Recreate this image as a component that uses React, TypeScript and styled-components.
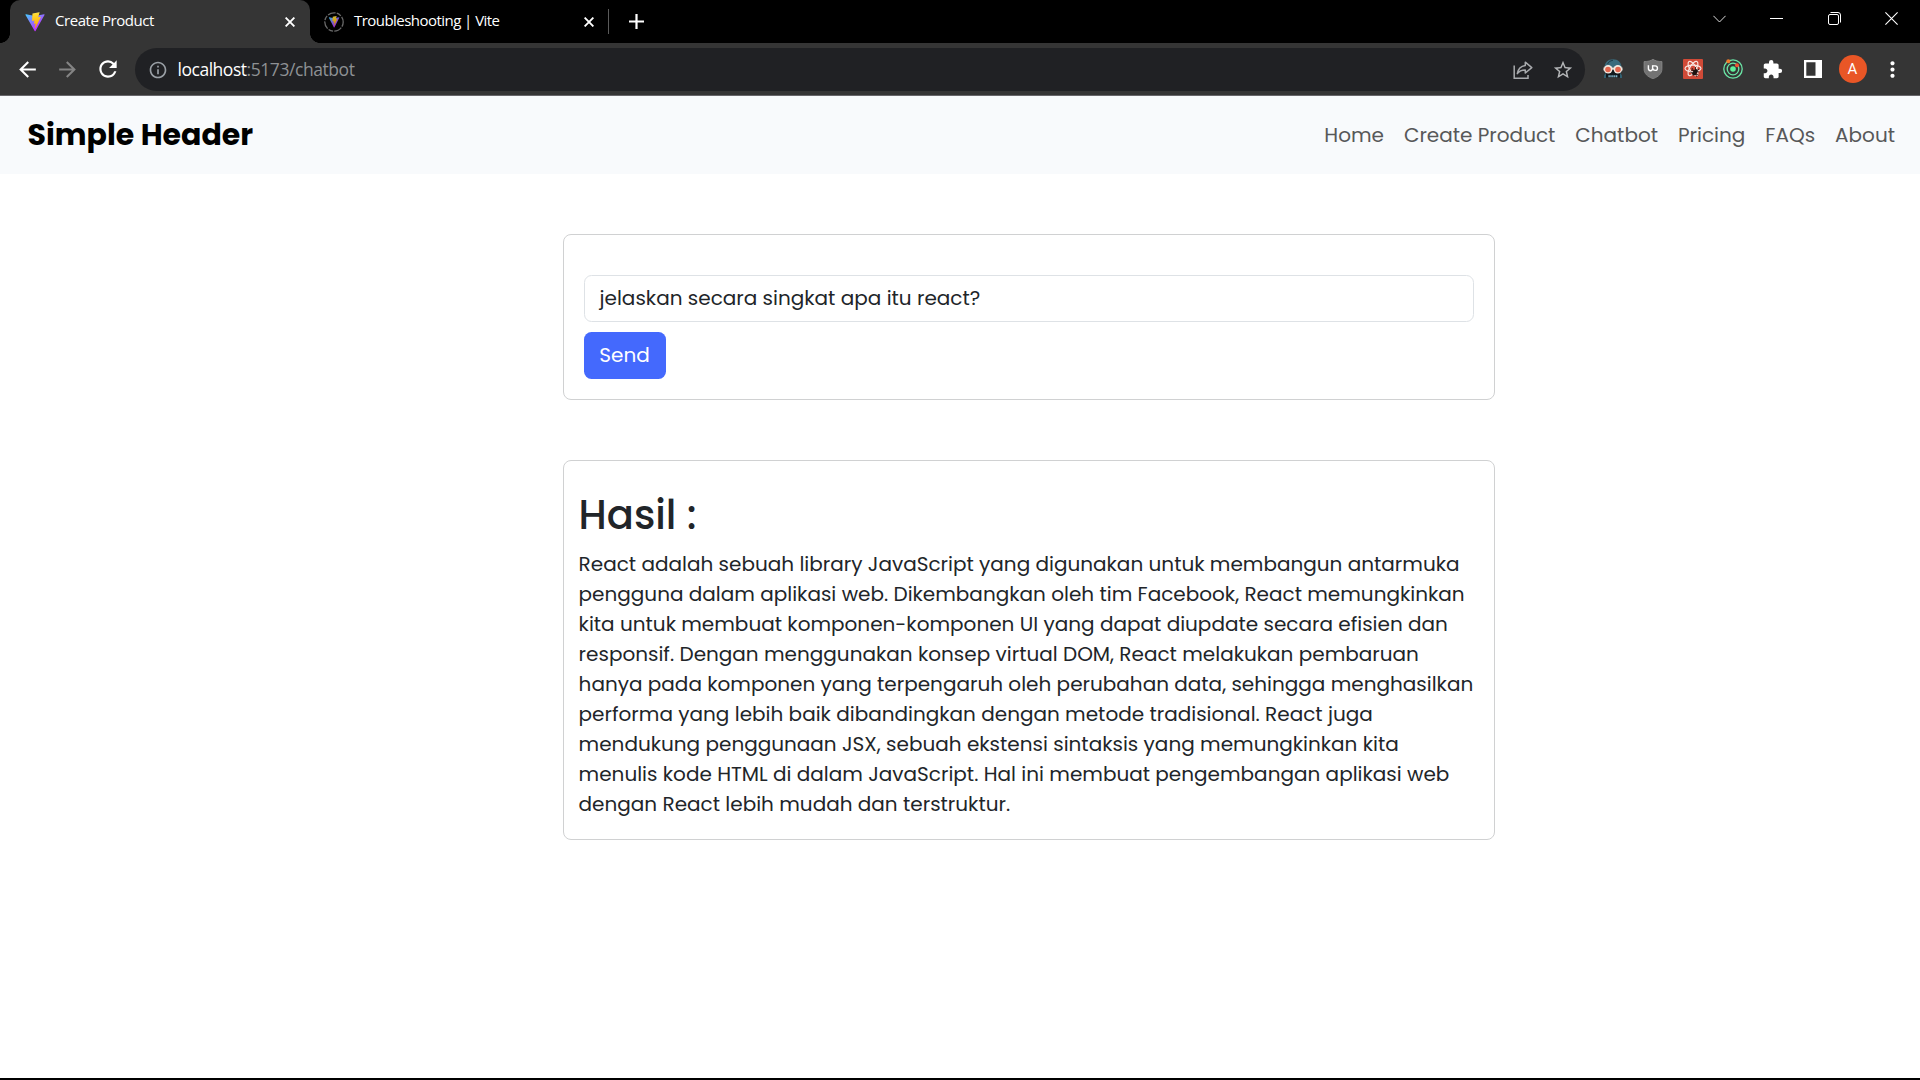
import React, { useLayoutEffect, useRef, useState } from "react";
import styled, { createGlobalStyle } from "styled-components";
import { MdArrowBack, MdArrowForward, MdRefresh, MdInfoOutline, MdStarBorder, MdExtension, MdMoreVert } from "react-icons/md";

const GlobalStyle = createGlobalStyle`
  * { box-sizing: border-box; }
  html, body { margin: 0; background: #fff; overflow: hidden; }
  svg { display: block; flex: none; }
`;

const Window = styled.div`
  width: 1920px;
  height: 1080px;
  display: flex;
  flex-direction: column;
  background: #fff;
  border-bottom: 2px solid #000;
  font-family: Poppins, Inter, "Liberation Sans", sans-serif;
  color: #212529;
`;

/* Browser chrome */
const TabStrip = styled.div`
  height: 43px;
  flex: none;
  display: flex;
  background: #000;
  color: #fff;
  font: 400 15px/20px "Segoe UI", "Open Sans", sans-serif;
`;
const TabFoot = styled.div<{ $side: "left" | "right" }>`
  width: 10px;
  height: 43px;
  flex: none;
  background: radial-gradient(circle at ${p => (p.$side === "left" ? "0" : "100%")} 0, #000 9.6px, #353535 10.2px) 0 33px / 10px 10px no-repeat;
`;
const Tab = styled.div<{ $active?: boolean }>`
  width: ${p => (p.$active ? 300 : 288)}px;
  height: 43px;
  padding: 0 ${p => (p.$active ? "15px" : "14px 0 4px")};
  display: flex;
  align-items: center;
  border-radius: 10px 10px 0 0;
  background: ${p => (p.$active ? "#353535" : "#000")};
`;
const TabTitle = styled.div`
  flex: 1;
  margin-left: 10px;
  padding-bottom: 3px;
  white-space: nowrap;
`;
const TabDivider = styled.div`
  width: 1px;
  height: 25px;
  margin-top: 9px;
  background: #5a5a5a;
`;
const NewTab = styled.div`
  width: 55px;
  display: flex;
  align-items: center;
  justify-content: center;
`;
const WindowControls = styled.div`
  margin-left: auto;
  height: 37px;
  display: flex;
`;
const Control = styled.div`
  width: 57.3px;
  display: flex;
  align-items: center;
  justify-content: center;
`;
const Toolbar = styled.div`
  height: 53px;
  flex: none;
  display: flex;
  padding: 0 7.5px;
  background: #353535;
  border-bottom: 1px solid #67666a;
  color: #fff;
`;
const Cell = styled.div<{ $dim?: boolean }>`
  width: 40px;
  height: 52px;
  display: flex;
  align-items: center;
  justify-content: center;
  color: ${p => (p.$dim ? "#848484" : "#fff")};
`;
const Omnibox = styled.div`
  width: 1450px;
  height: 43px;
  margin: 5px 7.5px 0;
  padding: 0 2.5px 0 12.5px;
  border-radius: 22px;
  display: flex;
  align-items: center;
  background: #202124;
  color: #9aa0a6;
`;
const Address = styled.div`
  flex: 1;
  margin-left: 10px;
  padding-bottom: 1px;
  display: flex;
  font: 400 17.5px/24px "Segoe UI", "Open Sans", sans-serif;
  color: #8e9194;
`;
const Host = styled.span`
  color: #fff;
`;
const Avatar = styled.div`
  width: 28px;
  height: 28px;
  border-radius: 50%;
  background: #e95626;
  color: #fff;
  font: 400 15px/28px Roboto, sans-serif;
  text-align: center;
`;

/* Page */
const Header = styled.header`
  height: 78px;
  flex: none;
  display: flex;
  align-items: center;
  justify-content: space-between;
  padding: 0 25px 0 27.5px;
  background: #f8fafc;
`;
const Brand = styled.div`
  font-size: 30px;
  font-weight: 700;
  line-height: 40px;
  color: #000;
`;
const Nav = styled.nav`
  display: flex;
  gap: 20px;
  font-size: 20px;
  line-height: 30px;
  font-weight: 400;
  color: #575859;
`;
const Main = styled.main`
  width: 932px;
  margin: 60px 0 0 562.6px;
  display: flex;
  flex-direction: column;
  gap: 60px;
`;
const Card = styled.section<{ $height: number; $pad: string }>`
  height: ${p => p.$height}px;
  padding: ${p => p.$pad};
  border: 1px solid #d0d1d2;
  border-radius: 8px;
`;
const PromptField = styled.div`
  height: 47px;
  padding: 7px 15px;
  border: 1px solid #dee2e6;
  border-radius: 7.5px;
  font-size: 20px;
  line-height: 31px;
  font-weight: 400;
`;
const SendButton = styled.button`
  display: block;
  width: 82px;
  height: 47px;
  margin-top: 10px;
  padding: 0 0 1px;
  border: 0;
  border-radius: 7.5px;
  background: #4469fd;
  color: #fff;
  font: 400 20px/30px Poppins, Inter, sans-serif;
`;
const ResultTitle = styled.h1`
  margin: 0 0 10px;
  font-size: 40px;
  line-height: 48px;
  font-weight: 500;
`;
const Answer = styled.p`
  margin: 0;
  font-size: 20px;
  line-height: 30px;
  font-weight: 400;
`;
const Measured = styled.span`
  display: inline-block;
  white-space: nowrap;
`;

/* Spreads the letters so that a run of text takes the given width. */
function Fit({ width, children }: { width: number; children: string }) {
  const ref = useRef<HTMLSpanElement>(null);
  const [spacing, setSpacing] = useState(0);
  useLayoutEffect(() => {
    const el = ref.current;
    if (el) {
      el.style.letterSpacing = "0px";
      setSpacing((width - el.getBoundingClientRect().width) / children.length);
    }
  }, [width, children]);
  return <Measured ref={ref} style={{ letterSpacing: `${spacing}px` }}>{children}</Measured>;
}

const ViteShapes = ({ id }: { id: string }) => (
  <>
    <defs>
      <linearGradient id={`${id}a`} x1="6" y1="33" x2="235" y2="344" gradientUnits="userSpaceOnUse">
        <stop stopColor="#41D1FF" /><stop offset="1" stopColor="#BD34FE" />
      </linearGradient>
      <linearGradient id={`${id}b`} x1="194.651" y1="8.818" x2="236.076" y2="292.989" gradientUnits="userSpaceOnUse">
        <stop stopColor="#FFEA83" /><stop offset=".083" stopColor="#FFDD35" /><stop offset="1" stopColor="#FFA800" />
      </linearGradient>
    </defs>
    <path fill={`url(#${id}a)`} d="M399.641 59.5246L215.643 388.545C211.844 395.338 202.084 395.378 198.228 388.618L10.5817 59.5563C6.38087 52.1896 12.6802 43.2665 21.0281 44.7586L205.223 77.6824C206.398 77.8924 207.601 77.8904 208.776 77.6763L389.119 44.8058C397.439 43.2894 403.768 52.1434 399.641 59.5246Z" />
    <path fill={`url(#${id}b)`} d="M292.965 1.5744L156.801 28.2552C154.563 28.6937 152.906 30.5903 152.771 32.8664L144.395 174.33C144.198 177.662 147.258 180.248 150.51 179.498L188.42 170.749C191.967 169.931 195.172 173.055 194.443 176.622L183.18 231.775C182.422 235.487 185.907 238.661 189.532 237.56L212.947 230.446C216.577 229.344 220.065 232.527 219.297 236.242L201.398 322.875C200.278 328.294 207.486 331.249 210.492 326.603L212.5 323.5L323.454 102.072C325.312 98.3645 322.108 94.137 318.036 94.9228L279.014 102.454C275.347 103.161 272.227 99.746 273.262 96.1583L298.731 7.86689C299.767 4.27314 296.636 0.855181 292.965 1.5744Z" />
  </>
);
const ViteIcon = () => <svg width="20" height="20" viewBox="0 0 410 404"><ViteShapes id="v" /></svg>;
const ViteDimIcon = () => (
  <svg width="20" height="20" viewBox="0 0 20 20">
    <circle cx="10" cy="10" r="9.2" fill="none" stroke="#696969" strokeWidth="1.3" strokeDasharray="4.8 1.3 8 1.2" />
    <g transform="translate(4.6 4) scale(.0268 .0295)" opacity=".82"><ViteShapes id="w" /></g>
  </svg>
);
const CrossIcon = () => <svg width="10" height="10" viewBox="0 0 10 10" stroke="#fff" strokeWidth="1.9"><path d="M.6.6l8.8 8.8M9.4.6L.6 9.4" /></svg>;
const ShareIcon = () => (
  <svg width="20" height="20" viewBox="0 0 20 20" fill="none" stroke="#a8aaad" strokeWidth="1.5">
    <path d="M1.2 5.5v12.800h13.800v-3.400" />
    <path d="M12.300 2.200l6.500 5.400-6.500 5.400v-3.100c-3.400 0-6.200 1-8 3.700.7-4.300 3.300-7.400 8-8.100z" strokeLinejoin="round" />
  </svg>
);
const RobotIcon = () => (
  <svg width="20" height="20" viewBox="0 0 20 20">
    <path d="M1.5 8.5C1.5 3.5 5 .3 10 .3s8.5 3.2 8.5 8.200z" fill="#3a6b7c" />
    <path d="M4.500 5Q6 1.500 10 1.200" stroke="#1f3d49" fill="none" />
    <path d="M2 9h16v9.500H2z" fill="#10181d" />
    <path d="M1 16.500l2-3v5.500H1zM19 16.500l-2-3v5.500h2z" fill="#326071" />
    <path d="M.5 8.500h19v3H.5z" fill="#e9ded5" />
    <circle cx="5.200" cy="10.300" r="4.300" fill="#f2e9e0" /><circle cx="14.800" cy="10.300" r="4.300" fill="#f2e9e0" />
    <circle cx="5" cy="10.500" r="2.800" fill="#e2654d" /><circle cx="15" cy="10.500" r="2.800" fill="#e2654d" />
    <path d="M8.700 12.500L10 10l1.300 2.500z" fill="#10181d" />
    <path d="M5.500 17.300h9" stroke="#91cce4" strokeWidth="2" strokeDasharray="1.200 .7" />
  </svg>
);
const ShieldIcon = () => (
  <svg width="20" height="20" viewBox="0 0 20 20">
    <path d="M10 .2c2.200 1.700 5 2.300 9 2.400v7c0 5-3.300 8-9 10.200C4.300 17.600 1 14.600 1 9.600v-7C5 2.500 7.800 1.900 10 .2z" fill="#737373" stroke="#8c8c8c" strokeWidth=".7" />
    <path d="M5.400 6.300v3.300a2.100 2.100 0 0 0 4.200 0V6.300" fill="none" stroke="#fff" strokeWidth="1.400" />
    <path d="M9.600 6.900h2.600a2.200 2.200 0 0 1 0 4.500c-1.600 0-2.300-.8-2.600-2" fill="none" stroke="#fff" strokeWidth="1.400" />
  </svg>
);
const ReactBugIcon = () => (
  <svg width="20" height="20" viewBox="0 0 20 20">
    <rect width="20" height="20" rx="1" fill="#d04a37" />
    <g fill="none" stroke="#f7e4df" strokeWidth="1.200">
      <ellipse cx="10" cy="9.500" rx="8" ry="3.300" />
      <ellipse cx="10" cy="9.500" rx="8" ry="3.300" transform="rotate(60 10 9.500)" />
      <ellipse cx="10" cy="9.500" rx="8" ry="3.300" transform="rotate(120 10 9.500)" />
    </g>
    <g stroke="#1c1210" strokeWidth=".8"><path d="M8 11l8 2M9 15l7-5M9 9l5 9M7.500 13l8 3M12.500 8v4" /></g>
    <ellipse cx="12" cy="13.300" rx="2" ry="3.500" transform="rotate(35 12 13.300)" fill="#1c1210" />
  </svg>
);
const OrbitIcon = () => (
  <svg width="20" height="20" viewBox="0 0 20 20">
    <g fill="none" stroke="#6be5a6" strokeWidth="1.300"><circle cx="10" cy="10" r="9.200" /><circle cx="10" cy="10" r="5.800" /></g>
    <circle cx="10" cy="10" r="2.800" fill="#5df09a" />
    <circle cx="5.300" cy="2.200" r="2" fill="#f07c2c" /><circle cx="14" cy="6.200" r="2" fill="#ee5330" />
  </svg>
);
const SidePanelIcon = () => (
  <svg width="18" height="18" viewBox="0 0 18 18"><path fill="#fff" fillRule="evenodd" d="M0 0h18v18H0zM2.300 2.300v13.400h9.200V2.300z" /></svg>
);

const navItems = ["Home", "Create Product", "Chatbot", "Pricing", "FAQs", "About"];
const answer =
  "React adalah sebuah library JavaScript yang digunakan untuk membangun antarmuka pengguna dalam aplikasi web. " +
  "Dikembangkan oleh tim Facebook, React memungkinkan kita untuk membuat komponen-komponen UI yang dapat diupdate secara efisien dan responsif. " +
  "Dengan menggunakan konsep virtual DOM, React melakukan pembaruan hanya pada komponen yang terpengaruh oleh perubahan data, " +
  "sehingga menghasilkan performa yang lebih baik dibandingkan dengan metode tradisional. " +
  "React juga mendukung penggunaan JSX, sebuah ekstensi sintaksis yang memungkinkan kita menulis kode HTML di dalam JavaScript. " +
  "Hal ini membuat pengembangan aplikasi web dengan React lebih mudah dan terstruktur.";

export default function App() {
  return (
    <Window>
      <GlobalStyle />
      <TabStrip>
        <TabFoot $side="left" />
        <Tab $active>
          <ViteIcon />
          <TabTitle><Fit width={99}>Create Product</Fit></TabTitle>
          <CrossIcon />
        </Tab>
        <TabFoot $side="right" />
        <Tab>
          <ViteDimIcon />
          <TabTitle><Fit width={145.5}>Troubleshooting | Vite</Fit></TabTitle>
          <CrossIcon />
        </Tab>
        <TabDivider />
        <NewTab><svg width="15" height="15" viewBox="0 0 15 15" stroke="#fff" strokeWidth="2.200"><path d="M7.500 0v15M0 7.500h15" /></svg></NewTab>
        <WindowControls>
          <Control><svg width="13" height="8" viewBox="0 0 13 8" fill="none" stroke="#ddd"><path d="M.4.8l6.100 6.200L12.600.8" /></svg></Control>
          <Control><svg width="13" height="1" viewBox="0 0 13 1"><path d="M0 0h13v1H0z" fill="#fff" /></svg></Control>
          <Control><svg width="13" height="13" viewBox="0 0 13 13" fill="none" stroke="#fff"><rect x=".5" y="2.500" width="10" height="10" rx="1.500" /><path d="M2.500.5H10A2.500 2.500 0 0 1 12.500 3v7.500" /></svg></Control>
          <Control><svg width="13" height="13" viewBox="0 0 13 13" stroke="#fff" strokeWidth="1.100"><path d="M.4.4l12.200 12.200M12.600.4L.4 12.600" /></svg></Control>
        </WindowControls>
      </TabStrip>
      <Toolbar>
        <Cell><MdArrowBack size={25} /></Cell>
        <Cell $dim><MdArrowForward size={25} /></Cell>
        <Cell><MdRefresh size={26} /></Cell>
        <Omnibox>
          <MdInfoOutline size={20} />
          <Address><Host><Fit width={69}>localhost</Fit></Host><Fit width={108}>:5173/chatbot</Fit></Address>
          <Cell><ShareIcon /></Cell>
          <Cell><MdStarBorder size={22} color="#b4b6b8" /></Cell>
        </Omnibox>
        <Cell><RobotIcon /></Cell>
        <Cell><ShieldIcon /></Cell>
        <Cell><ReactBugIcon /></Cell>
        <Cell><OrbitIcon /></Cell>
        <Cell><MdExtension size={21} /></Cell>
        <Cell><SidePanelIcon /></Cell>
        <Cell><Avatar>A</Avatar></Cell>
        <Cell><MdMoreVert size={25} /></Cell>
      </Toolbar>
      <Header>
        <Brand>Simple Header</Brand>
        <Nav>{navItems.map(label => <span key={label}>{label}</span>)}</Nav>
      </Header>
      <Main>
        <Card $height={166} $pad="40px 20px 0">
          <PromptField>jelaskan secara singkat apa itu react?</PromptField>
          <SendButton>Send</SendButton>
        </Card>
        <Card $height={380} $pad="30px 15px 0">
          <ResultTitle>Hasil :</ResultTitle>
          <Answer>{answer}</Answer>
        </Card>
      </Main>
    </Window>
  );
}
